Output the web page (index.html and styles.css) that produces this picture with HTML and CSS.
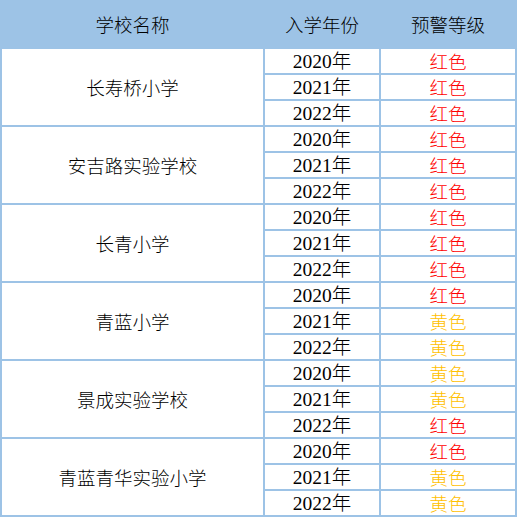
FILE: index.html
```html
<!DOCTYPE html>
<html lang="zh">
<head>
<meta charset="utf-8">
<link rel="stylesheet" href="styles.css">
</head>
<body>
<table class="tbl">
<colgroup><col class="c1"><col class="c2"><col class="c3"></colgroup>
<thead>
<tr class="head"><th>学校名称</th><th>入学年份</th><th>预警等级</th></tr>
</thead>
<tbody>
<tr><td rowspan="3" class="school">长寿桥小学</td><td class="year">2020年</td><td class="red">红色</td></tr>
<tr><td class="year">2021年</td><td class="red">红色</td></tr>
<tr><td class="year">2022年</td><td class="red">红色</td></tr>
<tr><td rowspan="3" class="school">安吉路实验学校</td><td class="year">2020年</td><td class="red">红色</td></tr>
<tr><td class="year">2021年</td><td class="red">红色</td></tr>
<tr><td class="year">2022年</td><td class="red">红色</td></tr>
<tr><td rowspan="3" class="school">长青小学</td><td class="year">2020年</td><td class="red">红色</td></tr>
<tr><td class="year">2021年</td><td class="red">红色</td></tr>
<tr><td class="year">2022年</td><td class="red">红色</td></tr>
<tr><td rowspan="3" class="school">青蓝小学</td><td class="year">2020年</td><td class="red">红色</td></tr>
<tr><td class="year">2021年</td><td class="yellow">黄色</td></tr>
<tr><td class="year">2022年</td><td class="yellow">黄色</td></tr>
<tr><td rowspan="3" class="school">景成实验学校</td><td class="year">2020年</td><td class="yellow">黄色</td></tr>
<tr><td class="year">2021年</td><td class="yellow">黄色</td></tr>
<tr><td class="year">2022年</td><td class="red">红色</td></tr>
<tr><td rowspan="3" class="school">青蓝青华实验小学</td><td class="year">2020年</td><td class="red">红色</td></tr>
<tr><td class="year">2021年</td><td class="yellow">黄色</td></tr>
<tr><td class="year">2022年</td><td class="yellow">黄色</td></tr>
</tbody>
</table>
</body>
</html>
```
FILE: styles.css
```css
html, body {
  margin: 0;
  padding: 0;
  background: #ffffff;
}
.tbl {
  border-collapse: separate;
  border-spacing: 0;
  table-layout: fixed;
  width: 517px;
  border-left: 2px solid #9dc3e6;
  font-family: "Noto Sans CJK SC", sans-serif;
  font-size: 18.5px;
  color: #000000;
}
.c1 { width: 263px; }
.c2 { width: 116px; }
.c3 { width: 136px; }
.tbl th, .tbl td {
  padding: 0;
  text-align: center;
  vertical-align: middle;
  border-right: 2px solid #9dc3e6;
  border-bottom: 2px solid #9dc3e6;
  box-sizing: border-box;
  line-height: 23px;
  font-weight: 300;
}
.head th {
  height: 49px;
  background: #9dc3e6;
  padding-top: 1px;
}
.tbl td {
  height: 26px;
  padding-top: 1px;
}
.year {
  font-family: "Liberation Serif", "Noto Sans CJK SC", serif;
  font-size: 19.5px;
  font-weight: 300;
}
.red {
  color: #ff0000;
}
.yellow {
  color: #ffc000;
}
```
